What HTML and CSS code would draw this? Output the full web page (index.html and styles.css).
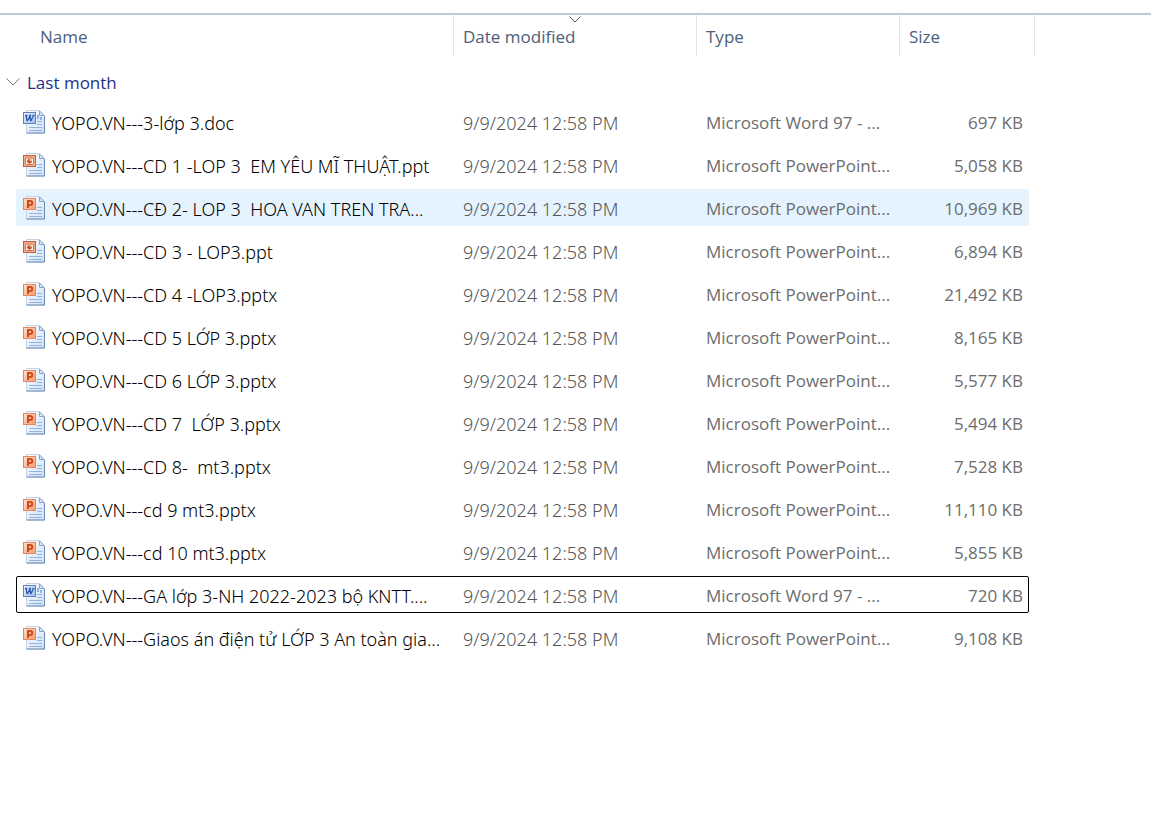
FILE: index.html
```html
<!DOCTYPE html>
<html lang="en">
<head>
<meta charset="utf-8">
<title>Files</title>
<link rel="stylesheet" href="styles.css">
<script src="files.js" defer></script>
</head>
<body>
<svg class="sprites" aria-hidden="true">
  <defs>
    <linearGradient id="paper" x1="0" y1="0" x2="1" y2="1">
      <stop offset="0" stop-color="#fdfeff"/><stop offset="1" stop-color="#cfe0f6"/>
    </linearGradient>
    <linearGradient id="blue" x1="0" y1="0" x2="1" y2="1">
      <stop offset="0" stop-color="#f1f6fe"/><stop offset="1" stop-color="#9dbcee"/>
    </linearGradient>
    <linearGradient id="orange" x1="0" y1="0" x2="1" y2="1">
      <stop offset="0" stop-color="#fde3cd"/><stop offset="1" stop-color="#f49a6c"/>
    </linearGradient>
  </defs>
  <symbol id="page" viewBox="0 0 24 24">
    <path d="M3.500 .5H16.500l5 5V23H3.500z" fill="url(#paper)" stroke="#c3d2e6"/>
    <path d="M3.500 23H21.500V6" fill="none" stroke="#6b88b3"/>
    <path d="M16.500 1V5.500H21z" fill="#dce9f9" stroke="#8ba4c6"/>
    <path d="M14 11.500h5M14 14.500h5M6 17.500h13M6 20.500h13" stroke="#94b3df"/>
  </symbol>
  <symbol id="word" viewBox="0 0 24 24">
    <use href="#page"/>
    <path d="M14 5h2v4h-2zM17 7h2v3h-2z" fill="#8fb2e3"/>
    <rect x=".5" y="2.500" width="12" height="11" fill="url(#blue)" stroke="#5f80c4"/>
    <path d="M3 5.500l1 5h.5L7 6l.5 4.500h.5L10.500 5.500M2 5.500h2.500M6 5.500h2M9.500 5.500h2" fill="none" stroke="#2f5bb0" stroke-width="1.300"/>
  </symbol>
  <symbol id="ppt" viewBox="0 0 24 24">
    <use href="#page"/>
    <rect x=".5" y="2.500" width="12" height="11" fill="#f3ad88" stroke="#bd6048"/>
    <rect x="2.500" y="5" width="8" height="6.500" rx="1" fill="#fff0e5" stroke="#cc7152"/>
    <circle cx="6.500" cy="8.200" r="2.300" fill="#bd4726"/>
    <path d="M6.500 8.200V5.900A2.300 2.300 0 0 1 8.800 8.200z" fill="#f7b995"/>
  </symbol>
  <symbol id="pptx" viewBox="0 0 24 24">
    <use href="#page"/>
    <rect x=".5" y="2.500" width="12" height="11" fill="url(#orange)" stroke="#e98460"/>
    <path d="M5 12V5h2.300a1.900 1.900 0 0 1 0 3.900H5" fill="none" stroke="#cf4a1d" stroke-width="2"/>
  </symbol>
</svg>
<main class="explorer">
  <table class="files">
    <thead>
      <tr class="columns">
        <th class="column column-name"><button class="sort">Name</button></th>
        <th class="column"><button class="sort">Date modified</button>
          <svg class="sort-mark" viewBox="0 0 12 7" aria-hidden="true"><path d="M.5 .5L6 6l5.500-5.500"/></svg>
        </th>
        <th class="column"><button class="sort">Type</button></th>
        <th class="column"><button class="sort">Size</button></th>
      </tr>
    </thead>
    <tbody class="rows" id="rows">
      <tr class="group"><th class="group-cell"><button class="group-toggle" aria-expanded="true">
        <svg class="chevron" viewBox="0 0 14 8" aria-hidden="true"><path d="M.5 .5L7 7l6.500-6.500"/></svg>Last month</button></th></tr>
    </tbody>
  </table>
</main>
</body>
</html>
```

FILE: styles.css
```css
* { box-sizing: border-box; }
body {
  margin: 0;
  background: #fff;
  color: #000;
  font-family: "Open Sans", "Noto Sans", sans-serif;
  font-size: 17px;
  line-height: 24px;
}
.sprites { position: absolute; width: 0; height: 0; }
.explorer { margin-top: 13px; border-top: 2px solid #bccbda; }
.files, .files thead, .rows { display: block; }
.files { padding-right: 116px; }
.columns, .file {
  display: grid;
  grid-template-columns: minmax(0, 1fr) 243px 203px 135px;
}
.column {
  position: relative;
  display: flex;
  align-items: center;
  height: 41px;
  padding: 2px 9px 0;
  border-right: 1px solid #e2e4e7;
  font-weight: 400;
}
.column-name { padding-left: 40px; }
.sort, .group-toggle {
  padding: 0;
  border: 0;
  background: none;
  font: inherit;
  color: #4c607a;
}
.sort-mark {
  position: absolute;
  top: 1px;
  left: 50%;
  width: 12px;
  height: 7px;
  margin-left: -6px;
  fill: none;
  stroke: #555;
}
.group { display: block; padding: 15px 0 8px 6px; }
.group-cell { display: block; padding: 0; text-align: left; font-weight: 400; }
.group-toggle { display: flex; align-items: center; gap: 7px; color: #1e3287; }
.chevron { width: 14px; height: 8px; margin-bottom: 2px; fill: none; stroke: #777; }
.file {
  grid-template-columns: minmax(0, 1fr) 243px 203px 128px;
  align-items: center;
  height: 37px;
  margin: 0 6px 6px 16px;
  border: 1px solid transparent;
  border-radius: 2px;
}
.file-hover { background: #e5f3ff; }
.file-focus { border-color: #000; }
.cell { padding: 3px 9px 0; color: #6d6d6d; white-space: pre; }
.cell-name, .cell-date {
  font-family: "Noto Sans", "Open Sans", sans-serif;
  font-size: 18px;
  font-weight: 350;
}
.cell-date { color: #555; }
.cell-name {
  display: flex;
  align-items: center;
  gap: 5px;
  padding: 0 0 0 6px;
  color: #000;
}
.label { padding-top: 3px; }
.cell-size { padding-right: 5px; text-align: right; }
.icon { flex: none; width: 24px; height: 24px; }
```

FILE: files.js
```js
const files = [
  ["word", "YOPO.VN---3-lớp 3.doc", "697 KB"],
  ["ppt", "YOPO.VN---CD 1 -LOP 3  EM YÊU MĨ THUẬT.ppt", "5,058 KB"],
  ["pptx", "YOPO.VN---CĐ 2- LOP 3  HOA VAN TREN TRA...", "10,969 KB", "file-hover"],
  ["ppt", "YOPO.VN---CD 3 - LOP3.ppt", "6,894 KB"],
  ["pptx", "YOPO.VN---CD 4 -LOP3.pptx", "21,492 KB"],
  ["pptx", "YOPO.VN---CD 5 LỚP 3.pptx", "8,165 KB"],
  ["pptx", "YOPO.VN---CD 6 LỚP 3.pptx", "5,577 KB"],
  ["pptx", "YOPO.VN---CD 7  LỚP 3.pptx", "5,494 KB"],
  ["pptx", "YOPO.VN---CD 8-  mt3.pptx", "7,528 KB"],
  ["pptx", "YOPO.VN---cd 9 mt3.pptx", "11,110 KB"],
  ["pptx", "YOPO.VN---cd 10 mt3.pptx", "5,855 KB"],
  ["word", "YOPO.VN---GA lớp 3-NH 2022-2023 bộ KNTT....", "720 KB", "file-focus"],
  ["pptx", "YOPO.VN---Giaos án điện tử LỚP 3 An toàn gia...", "9,108 KB"]
];
const html = files.map(([kind, name, size, state = ""]) => `
  <tr class="file ${state}">
    <td class="cell cell-name"><svg class="icon" aria-hidden="true"><use href="#${kind}"/></svg><span class="label">${name}</span></td>
    <td class="cell cell-date">9/9/2024 12:58 PM</td>
    <td class="cell">${kind === "word" ? "Microsoft Word 97 - ..." : "Microsoft PowerPoint..."}</td>
    <td class="cell cell-size">${size}</td>
  </tr>`).join("");
document.getElementById("rows").insertAdjacentHTML("beforeend", html);
```
